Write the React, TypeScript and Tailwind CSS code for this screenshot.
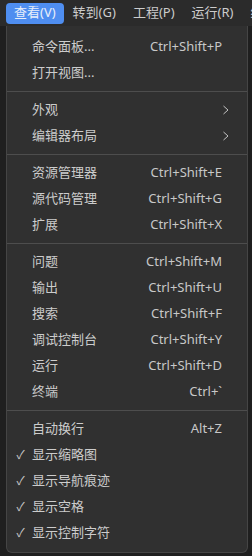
import React from "react";

type Item = {
  label: string;
  shortcut?: string;
  sub?: boolean;
  checked?: boolean;
};

const groups: Item[][] = [
  [
    { label: "命令面板...", shortcut: "Ctrl+Shift+P" },
    { label: "打开视图..." },
  ],
  [
    { label: "外观", sub: true },
    { label: "编辑器布局", sub: true },
  ],
  [
    { label: "资源管理器", shortcut: "Ctrl+Shift+E" },
    { label: "源代码管理", shortcut: "Ctrl+Shift+G" },
    { label: "扩展", shortcut: "Ctrl+Shift+X" },
  ],
  [
    { label: "问题", shortcut: "Ctrl+Shift+M" },
    { label: "输出", shortcut: "Ctrl+Shift+U" },
    { label: "搜索", shortcut: "Ctrl+Shift+F" },
    { label: "调试控制台", shortcut: "Ctrl+Shift+Y" },
    { label: "运行", shortcut: "Ctrl+Shift+D" },
    { label: "终端", shortcut: "Ctrl+`" },
  ],
  [
    { label: "自动换行", shortcut: "Alt+Z" },
    { label: "显示缩略图", checked: true },
    { label: "显示导航痕迹", checked: true },
    { label: "显示空格", checked: true },
    { label: "显示控制字符", checked: true },
  ],
];

const menus = ["转到(G)", "工程(P)", "运行(R)", "终端(T)"];

function MenuRow({ item }: { item: Item }) {
  return (
    <div className="flex h-[26px] items-center text-[13px] text-[#cccccc]">
      <span className="flex w-[25px] justify-center pl-[2px] text-[12px] text-[#c4c4c4]">
        {item.checked ? "✓" : ""}
      </span>
      <span className="flex-1 whitespace-nowrap">{item.label}</span>
      {item.shortcut && (
        <span className="pr-[25px] whitespace-nowrap text-[#c8c8c8]">{item.shortcut}</span>
      )}
      {item.sub && (
        <span className="flex w-[26px] justify-start pl-[1px]">
          <svg width="8" height="10" viewBox="0 0 8 10" fill="none">
            <path d="M1.5 1 L6 5 L1.5 9" stroke="#c4c4c4" strokeWidth="1" />
          </svg>
        </span>
      )}
    </div>
  );
}

export default function App() {
  return (
    <div
      className="h-[556px] w-[252px] overflow-hidden bg-[#1f1f1f]"
      style={{ fontFamily: '"Noto Sans", "Noto Sans CJK SC", sans-serif' }}
    >
      <div className="flex h-[26px] items-center gap-[1px] overflow-hidden bg-[#2b2b2b] pl-[6px] text-[13px] text-[#cccccc]">
        <div className="flex h-[21px] shrink-0 items-center whitespace-nowrap rounded-[4px] bg-[#4f8ef0] px-[8px] text-[#e8eefa]">
          查看(V)
        </div>
        {menus.map((m) => (
          <span key={m} className="shrink-0 whitespace-nowrap px-[8px]">
            {m}
          </span>
        ))}
      </div>
      <div className="ml-[6px] w-[242px] rounded-b-[6px] border border-t-0 border-[#454545] bg-[#303030] pt-[8px] pb-[6px]">
        {groups.map((g, gi) => (
          <div key={gi}>
            {gi > 0 && <div className="my-[5px] h-px bg-[#4d4d4d]" />}
            {g.map((it) => (
              <MenuRow key={it.label} item={it} />
            ))}
          </div>
        ))}
      </div>
    </div>
  );
}
